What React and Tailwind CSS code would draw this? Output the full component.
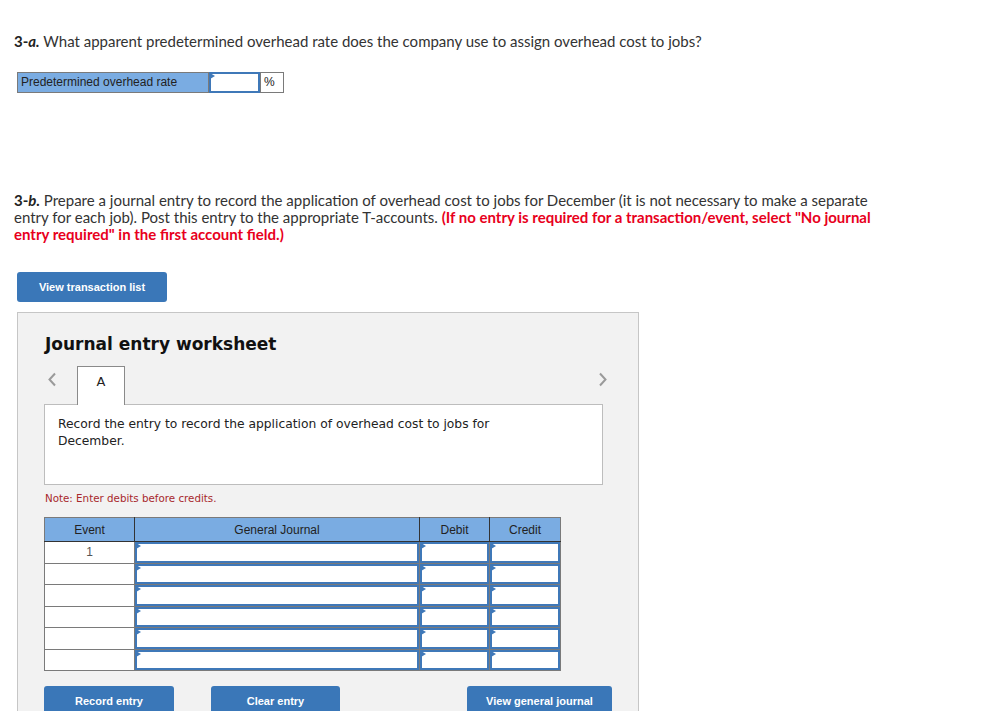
import React from 'react';

const head = { fontFamily: 'Lato, "Open Sans", sans-serif' };
const arial = { fontFamily: '"Liberation Sans", Arial, sans-serif' };
const verdana = { fontFamily: '"DejaVu Sans", Verdana, sans-serif' };

function Chevron({ dir }) {
  return (
    <svg width="10" height="15" viewBox="0 0 10 15" className="block">
      {dir === 'left' ? (
        <path d="M8 1.5 L2.5 7.5 L8 13.5" fill="none" stroke="#9a9a9a" strokeWidth="2" />
      ) : (
        <path d="M2 1.5 L7.5 7.5 L2 13.5" fill="none" stroke="#9a9a9a" strokeWidth="2" />
      )}
    </svg>
  );
}

function InputCell() {
  return (
    <td className="relative p-0 border border-[#7a7a7a]">
      <div className="absolute inset-0 border-2 border-[#3f78b8] bg-white">
        <span className="absolute -top-px -left-px w-0 h-0 border-l-[5px] border-l-[#3f78b8] border-y-[3px] border-y-transparent" />
      </div>
    </td>
  );
}

export default function App() {
  const rows = [22, 21, 22, 21, 22, 21];

  return (
    <div className="w-[983px] h-[711px] overflow-hidden bg-white text-[#333]">
      <div className="pt-[33px] pl-[14px]">
        <p className="text-[15px] leading-[17px] text-[#333]" style={head}>
          <b className="text-[#222]">3-<i>a.</i></b> What apparent predetermined overhead rate does the company use to assign overhead cost to jobs?
        </p>

        <div className="mt-[22px] ml-[3px] flex h-[21px]" style={arial}>
          <div className="w-[192px] bg-[#7aace2] border border-[#7a7a7a] text-[12px] leading-[19px] pl-[3px] text-[#222]">
            Predetermined overhead rate
          </div>
          <div className="relative w-[51px] bg-white border-2 border-[#3f78b8]">
            <span className="absolute -top-px -left-px w-0 h-0 border-l-[5px] border-l-[#3f78b8] border-y-[3px] border-y-transparent" />
          </div>
          <div className="w-[24px] border border-[#7a7a7a] text-[12px] leading-[19px] pl-[3px] text-[#222]">%</div>
        </div>

        <p className="mt-[99px] w-[870px] text-[15px] leading-[17px] text-[#333]" style={head}>
          <b className="text-[#222]">3-<i>b.</i></b> Prepare a journal entry to record the application of overhead cost to jobs for December (it is not necessary to make a separate entry for each job). Post this entry to the appropriate T-accounts.{' '}
          <b className="text-[#e8001c]">(If no entry is required for a transaction/event, select "No journal entry required" in the first account field.)</b>
        </p>
      </div>

      <div className="pl-[17px]">
        <button
          className="mt-[29px] w-[150px] h-[30px] rounded-[3px] bg-[#3a77b8] text-white text-[11px] font-bold"
          style={arial}
        >
          View transaction list
        </button>

        <div className="mt-[10px] w-[622px] h-[420px] bg-[#f2f2f2] border border-[#c6c6c6] pl-[26px] pt-[21px]">
          <h2 className="text-[17px] leading-[20px] font-bold text-[#111] ml-px" style={verdana}>
            Journal entry worksheet
          </h2>

          <div className="mt-[12px] w-[568px] flex items-start">
            <div className="w-[33px] h-[26px] flex items-center pl-[3px]">
              <Chevron dir="left" />
            </div>
            <div
              className="relative z-10 -mb-px w-[48px] h-[39px] bg-white border border-b-0 border-[#8a8a8a] text-center text-[13px] leading-[15px] pt-[7px] text-[#222]"
              style={verdana}
            >
              A
            </div>
            <div className="flex-1" />
            <div className="w-[14px] h-[26px] flex items-center">
              <Chevron dir="right" />
            </div>
          </div>

          <div
            className="w-[559px] h-[81px] bg-white border border-[#bdbdbd] pl-[13px] pt-[11px] pr-[100px] text-[12.3px] leading-[17px] text-[#222]"
            style={verdana}
          >
            Record the entry to record the application of overhead cost to jobs for December.
          </div>

          <p className="mt-[7px] text-[10.3px] leading-[12px] text-[#a8282c] ml-px" style={verdana}>
            Note: Enter debits before credits.
          </p>

          <table className="mt-[13px] border-collapse border border-[#7a7a7a] table-fixed" style={arial}>
            <colgroup>
              <col className="w-[90px]" />
              <col className="w-[285px]" />
              <col className="w-[70px]" />
              <col className="w-[71px]" />
            </colgroup>
            <thead>
              <tr className="h-[24px] bg-[#7aace2] text-[12px] text-[#222]">
                <th className="p-0 font-normal border border-[#333] border-t-[#7a7a7a] border-l-[#7a7a7a]">Event</th>
                <th className="p-0 font-normal border border-[#333] border-t-[#7a7a7a]">General Journal</th>
                <th className="p-0 font-normal border border-[#333] border-t-[#7a7a7a]">Debit</th>
                <th className="p-0 font-normal border border-[#333] border-t-[#7a7a7a] border-r-[#7a7a7a]">Credit</th>
              </tr>
            </thead>
            <tbody>
              {rows.map((h, i) => (
                <tr key={i} style={{ height: h }}>
                  <td className="p-0 bg-white border border-[#7a7a7a] text-center text-[12px] leading-[14px] align-top pt-[3px] text-[#555]">
                    {i === 0 ? '1' : ''}
                  </td>
                  <InputCell />
                  <InputCell />
                  <InputCell />
                </tr>
              ))}
            </tbody>
          </table>

          <div className="mt-[15px] flex text-white text-[11px] font-bold" style={arial}>
            <button className="w-[130px] h-[30px] rounded-t-[3px] bg-[#3a77b8] pt-px">Record entry</button>
            <button className="ml-[37px] w-[129px] h-[30px] rounded-t-[3px] bg-[#3a77b8] pt-px">Clear entry</button>
            <button className="ml-[127px] w-[145px] h-[30px] rounded-t-[3px] bg-[#3a77b8] pt-px">View general journal</button>
          </div>
        </div>
      </div>
    </div>
  );
}
